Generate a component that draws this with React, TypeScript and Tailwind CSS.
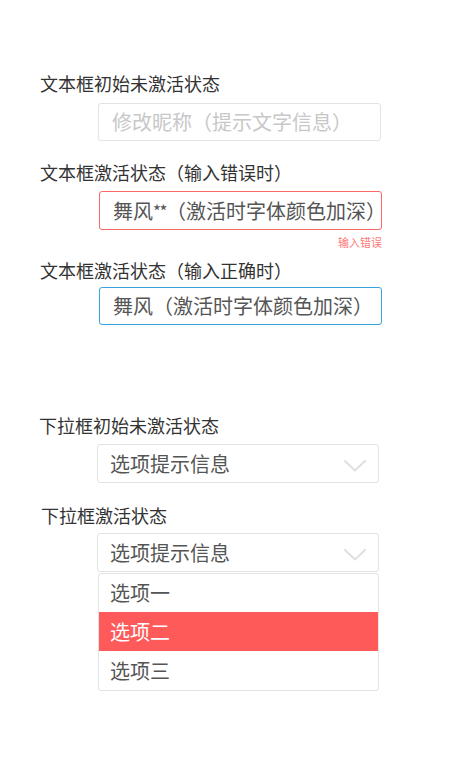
const font = { fontFamily: '"Noto Sans CJK SC", "Noto Sans", sans-serif' };

function Chevron() {
  return (
    <svg width="22" height="12" viewBox="0 0 22 12" fill="none" className="shrink-0">
      <path d="M1 1 L11 10.5 L21 1" stroke="#e0e0e0" strokeWidth="2" strokeLinecap="round" strokeLinejoin="round" />
    </svg>
  );
}

export default function App() {
  return (
    <div className="min-h-[781px] w-full bg-white flex flex-col" style={font}>
      {/* 文本框 */}
      <p className="mt-[71px] ml-[40px] text-[18px] leading-[24px] text-[#333]">文本框初始未激活状态</p>
      <div className="mt-[8px] ml-[98px] w-[283px] h-[38px] flex items-center pl-[13px] rounded-[3px] border border-[#e3e3e3] text-[20px] text-[#c8c8c8]">
        修改昵称（提示文字信息）
      </div>

      <p className="mt-[19px] ml-[40px] text-[18px] leading-[24px] text-[#333]">文本框激活状态（输入错误时）</p>
      <div className="mt-[7px] ml-[99px] w-[283px] h-[39px] flex items-center pl-[13px] rounded-[3px] border-[1.5px] border-[#fa6868] text-[20px] text-[#555] whitespace-nowrap">
        舞风<span className="text-[17px] tracking-[-1.5px] pt-[1px]">**</span>（激活时字体颜色加深）
      </div>
      <p className="mt-[7px] w-[382px] text-right text-[11px] leading-[11px] text-[#f77]">输入错误</p>

      <p className="mt-[10px] ml-[40px] text-[18px] leading-[24px] text-[#333]">文本框激活状态（输入正确时）</p>
      <div className="mt-[5px] ml-[99px] w-[283px] h-[38px] flex items-center pl-[13px] rounded-[3px] border-[1.5px] border-[#3aa3dd] text-[20px] text-[#555] whitespace-nowrap">
        舞风（激活时字体颜色加深）
      </div>

      {/* 下拉框 */}
      <p className="mt-[88px] ml-[39px] text-[18px] leading-[24px] text-[#333]">下拉框初始未激活状态</p>
      <div className="mt-[7px] ml-[97px] w-[282px] h-[39px] flex items-center justify-between pl-[12px] pr-[12px] rounded-[3px] border border-[#e3e3e3] text-[20px] text-[#555]">
        <span>选项提示信息</span>
        <span className="pt-[5px]"><Chevron /></span>
      </div>

      <p className="mt-[20px] ml-[41px] text-[18px] leading-[24px] text-[#333]">下拉框激活状态</p>
      <div className="mt-[6px] ml-[97px] w-[282px] h-[39px] flex items-center justify-between pl-[12px] pr-[12px] rounded-[3px] border border-[#e3e3e3] text-[20px] text-[#555]">
        <span>选项提示信息</span>
        <span className="pt-[5px]"><Chevron /></span>
      </div>
      <ul className="mt-[1px] ml-[98px] w-[281px] rounded-[3px] border border-[#e3e3e3] text-[20px] text-[#555] overflow-hidden">
        <li className="h-[38px] flex items-center pl-[11px]">选项一</li>
        <li className="h-[39px] flex items-center pl-[11px] bg-[#ff5a5a] text-white">选项二</li>
        <li className="h-[39px] flex items-center pl-[11px]">选项三</li>
      </ul>
    </div>
  );
}
